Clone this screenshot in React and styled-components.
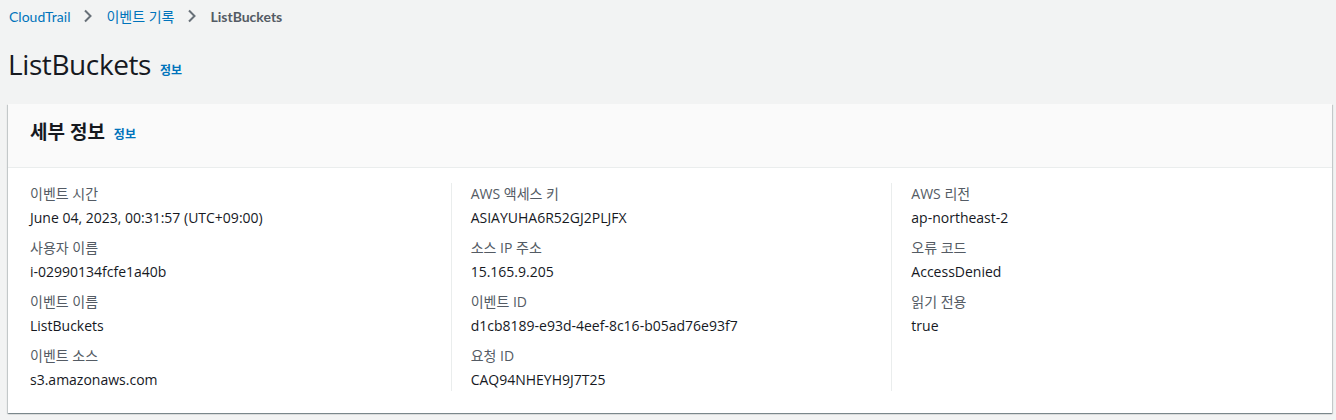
import styled, { createGlobalStyle } from "styled-components";

const GlobalStyle = createGlobalStyle`
  html, body {
    margin: 0;
    background: #f2f3f3;
    font-family: "Open Sans", "Noto Sans CJK KR", sans-serif;
    color: #16191f;
  }
`;

const details = [
  [
    ["이벤트 시간", "June 04, 2023, 00:31:57 (UTC+09:00)"],
    ["사용자 이름", "i-02990134fcfe1a40b"],
    ["이벤트 이름", "ListBuckets"],
    ["이벤트 소스", "s3.amazonaws.com"],
  ],
  [
    ["AWS 액세스 키", "ASIAYUHA6R52GJ2PLJFX"],
    ["소스 IP 주소", "15.165.9.205"],
    ["이벤트 ID", "d1cb8189-e93d-4eef-8c16-b05ad76e93f7"],
    ["요청 ID", "CAQ94NHEYH9J7T25"],
  ],
  [
    ["AWS 리전", "ap-northeast-2"],
    ["오류 코드", "AccessDenied"],
    ["읽기 전용", "true"],
  ],
];

const Chevron = () => (
  <svg width="12" height="16" viewBox="0 0 12 16">
    <path d="M3 2.5 L8.5 8 L3 13.5" fill="none" stroke="#687078" strokeWidth="2" />
  </svg>
);

const App = () => {
  return (
    <Page>
      <GlobalStyle />
      <Breadcrumbs>
        <Crumb href="#">CloudTrail</Crumb>
        <Chevron />
        <Crumb href="#">이벤트 기록</Crumb>
        <Chevron />
        <Current>ListBuckets</Current>
      </Breadcrumbs>
      <TitleRow>
        <Title>ListBuckets</Title>
        <InfoLink href="#">정보</InfoLink>
      </TitleRow>
      <Card>
        <CardHeader>
          <CardTitle>세부 정보</CardTitle>
          <InfoLink href="#">정보</InfoLink>
        </CardHeader>
        <CardBody>
          {details.map((col, i) => (
            <Column key={i} $divider={i > 0}>
              {col.map(([label, value]) => (
                <Field key={label}>
                  <Label>{label}</Label>
                  <Value>{value}</Value>
                </Field>
              ))}
            </Column>
          ))}
        </CardBody>
      </Card>
    </Page>
  );
};

export default App;

const Page = styled.div`
  padding: 5px 4px 8px 8px;
`;

const Breadcrumbs = styled.nav`
  display: flex;
  align-items: center;
  gap: 12px;
  height: 22px;
  padding-left: 1px;
  font-family: "Lato", "Noto Sans CJK KR", sans-serif;
  font-size: 14px;
`;

const Crumb = styled.a`
  color: #0073bb;
  text-decoration: none;
`;

const Current = styled.span`
  color: #545b64;
  font-weight: 700;
`;

const TitleRow = styled.div`
  display: flex;
  align-items: baseline;
  gap: 9px;
  padding: 18px 0 21px 0;
`;

const Title = styled.h1`
  margin: 0;
  font-size: 28px;
  font-weight: 400;
  letter-spacing: -0.4px;
  line-height: 38px;
  color: #16191f;
`;

const InfoLink = styled.a`
  color: #0073bb;
  font-size: 12px;
  font-weight: 700;
  text-decoration: none;
`;

const Card = styled.section`
  background: #fff;
  box-shadow: 0 1px 1px 0 rgba(0, 28, 36, 0.3), 1px 1px 1px 0 rgba(0, 28, 36, 0.15),
    -1px 1px 1px 0 rgba(0, 28, 36, 0.15);
`;

const CardHeader = styled.header`
  display: flex;
  align-items: baseline;
  gap: 9px;
  height: 64px;
  box-sizing: border-box;
  padding: 14px 22px 0;
  background: #fafafa;
  border-bottom: 1px solid #eaeded;
`;

const CardTitle = styled.h2`
  margin: 0;
  font-size: 19px;
  font-weight: 700;
  line-height: 28px;
`;

const CardBody = styled.div`
  display: grid;
  grid-template-columns: repeat(3, 1fr);
  padding: 15px 0 22px 2px;
`;

const Column = styled.div`
  display: flex;
  flex-direction: column;
  gap: 8px;
  padding: 0 20px 0 19px;
  border-left: 1px solid ${(p) => (p.$divider ? "#eaeded" : "transparent")};
`;

const Field = styled.div`
  display: flex;
  flex-direction: column;
  gap: 2px;
`;

const Label = styled.div`
  font-size: 14px;
  line-height: 22px;
  color: #545b64;
`;

const Value = styled.div`
  font-size: 14px;
  line-height: 22px;
  color: #16191f;
`;
